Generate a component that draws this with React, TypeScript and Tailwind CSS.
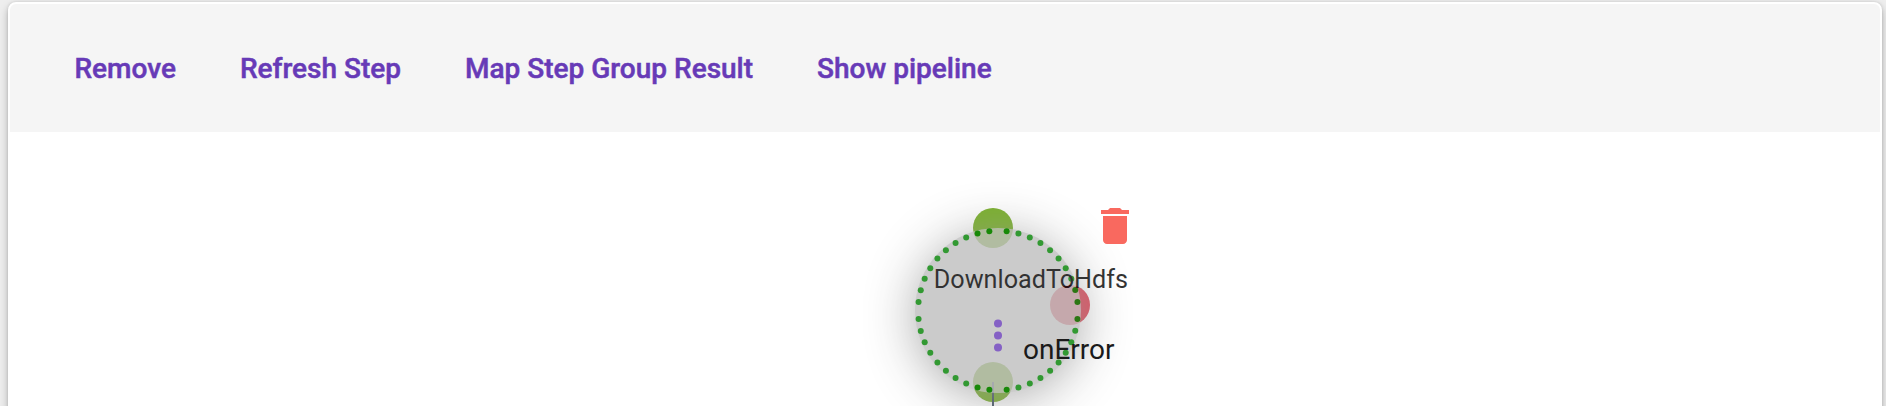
const actions = ['Remove', 'Refresh Step', 'Map Step Group Result', 'Show pipeline'];

const border: { x: number; y: number }[] = [];
for (let quadrant = 0; quadrant < 4; quadrant++) {
  for (let i = 0; i < 10; i++) {
    const angle = ((quadrant * 90 + 6.2 + i * 8.62) * Math.PI) / 180;
    border.push({ x: 83 + 79.9 * Math.cos(angle), y: 82.5 + 79.6 * Math.sin(angle) });
  }
}

function StepNode() {
  return (
    <div className="absolute left-[905px] top-[96px] grid h-[165px] w-[166px] rounded-full bg-[#bfbfbf] opacity-80 shadow-[0_6px_50px_#999999]">
      <svg className="col-start-1 row-start-1" width="166" height="165" viewBox="0 0 166 165">
        {border.map((dot, i) => (
          <circle key={i} cx={dot.x} cy={dot.y} r="3" fill="#008000" />
        ))}
        <g fill="#673ab7">
          <circle cx="83" cy="95.5" r="4" />
          <circle cx="83" cy="107.5" r="4" />
          <circle cx="83" cy="119.5" r="4" />
        </g>
      </svg>
      <span className="z-10 col-start-1 row-start-1 w-[166px] whitespace-nowrap pl-[18.8px] pt-[36.600px] text-[25.2px] leading-[30px] text-black">
        DownloadToHdfs
      </span>
    </div>
  );
}

export default function App() {
  return (
    <div className="h-[406px] overflow-hidden bg-[#eeeeee] pl-2 pr-1 pt-0.5 font-['Roboto',sans-serif]">
      <main className="h-[460px] rounded-[8px] border-2 border-white bg-white shadow-[0_4px_8px_rgba(0,0,0,0.25),0_0_3px_rgba(0,0,0,0.12)]">
        <nav className="flex h-32 items-center gap-16 rounded-t-[6px] bg-[#f5f5f5] pl-[64.5px] pt-0.5 text-[28px] font-medium text-[#673ab7] [-webkit-text-stroke:0.5px_#673ab7]">
          {actions.map((label) => (
            <button key={label} className="whitespace-nowrap">{label}</button>
          ))}
        </nav>
        <section className="relative h-[274px] overflow-hidden">
          <div className="absolute left-[963px] top-[76px] size-10 rounded-full bg-[#7ab12c]" />
          <div className="absolute left-[963px] top-[230px] size-10 rounded-full bg-[#7ab12c]" />
          <div className="absolute left-[1040px] top-[153px] size-10 rounded-full bg-[#e05060]" />
          <div className="absolute left-[982px] top-[250px] h-6 w-0.5 bg-[#456]" />
          <StepNode />
          <span className="absolute left-[1013px] top-[202px] text-[28px] leading-8 text-[#1a1a1a]">onError</span>
          <svg className="absolute left-[1080.6px] top-[70px]" width="48" height="48" viewBox="0 0 24 24" fill="#f9695f">
            <path d="M6 19c0 1.100.9 2 2 2h8c1.100 0 2-.9 2-2V7H6v12zM19 4h-3.500l-1-1h-5l-1 1H5v2h14V4z" />
          </svg>
        </section>
      </main>
    </div>
  );
}
